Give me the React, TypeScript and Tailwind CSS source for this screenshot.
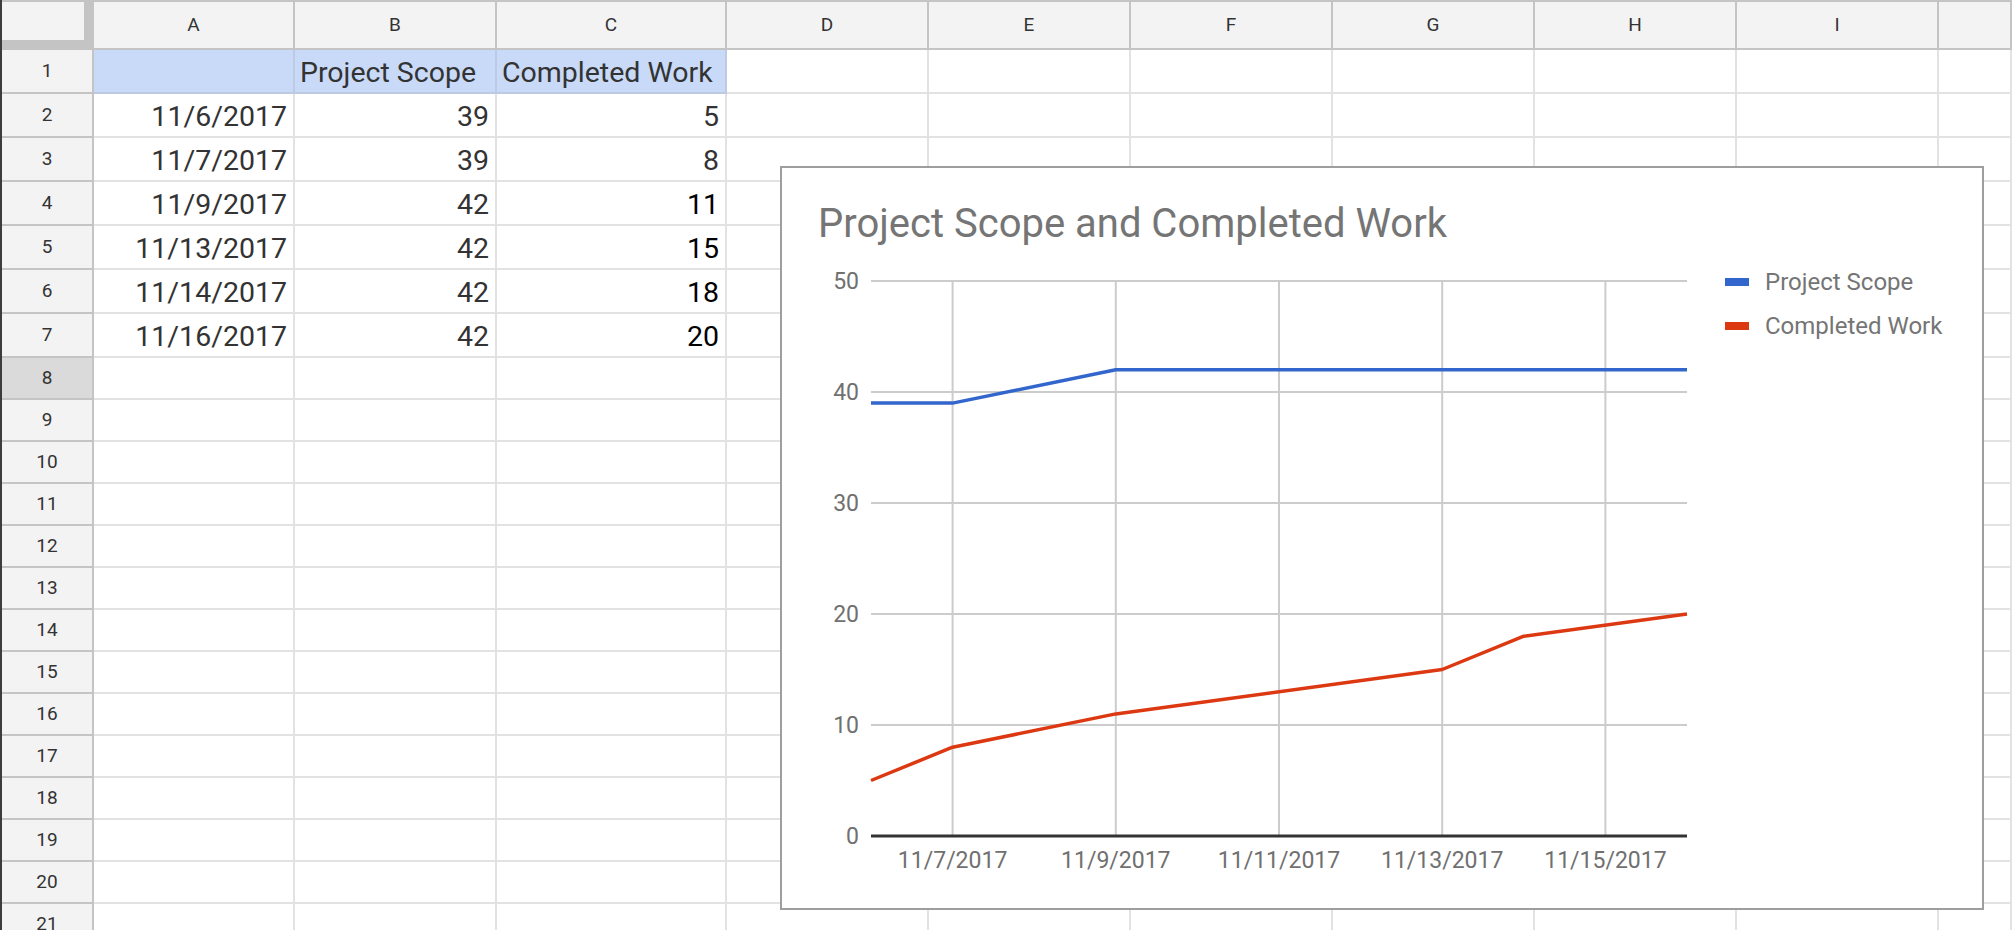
import React from "react";

const COLS =
  "grid grid-cols-[92px_201px_202px_230px_202px_202px_202px_202px_202px_202px_1fr]";

const letters = ["A", "B", "C", "D", "E", "F", "G", "H", "I", ""];

type Cell = { v: string; align?: "l" | "r"; dark?: boolean };

const data: Cell[][] = [
  [{ v: "" }, { v: "Project Scope", align: "l" }, { v: "Completed Work", align: "l" }],
  [{ v: "11/6/2017" }, { v: "39" }, { v: "5" }],
  [{ v: "11/7/2017" }, { v: "39" }, { v: "8" }],
  [{ v: "11/9/2017" }, { v: "42" }, { v: "11", dark: true }],
  [{ v: "11/13/2017" }, { v: "42" }, { v: "15", dark: true }],
  [{ v: "11/14/2017" }, { v: "42" }, { v: "18", dark: true }],
  [{ v: "11/16/2017" }, { v: "42" }, { v: "20", dark: true }],
];

function HeaderRow() {
  return (
    <div className={`${COLS} h-[50px]`}>
      <div className="bg-[#c4c4c4]">
        <div className="mt-[2px] w-[82px] h-[38px] bg-[#f3f3f3]" />
      </div>
      {letters.map((l, i) => (
        <div
          key={i}
          className="border-t-2 border-b-2 border-r-2 border-[#c4c4c4] bg-[#f3f3f3] flex items-center justify-center text-[19px] text-[#333]"
        >
          {l}
        </div>
      ))}
    </div>
  );
}

function RowHead({ n }: { n: number }) {
  const sel = n === 8;
  return (
    <div
      className={
        sel
          ? "border-r-2 border-b-2 border-[#c4c4c4] bg-[#dadada] flex items-center justify-center text-[19px] text-[#333]"
          : "border-r-2 border-b-2 border-[#c4c4c4] bg-[#f3f3f3] flex items-center justify-center text-[19px] text-[#333]"
      }
    >
      {n}
    </div>
  );
}

function DataRow({ n, cells }: { n: number; cells: Cell[] }) {
  const blue = n === 1;
  return (
    <div className={`${COLS} h-[44px]`}>
      <RowHead n={n} />
      {cells.map((c, i) => {
        const base =
          "border-r-2 border-b-2 flex items-end pb-[3px] text-[28.5px] leading-[32px] whitespace-nowrap overflow-hidden";
        const bg = blue ? " bg-[#c9daf8] border-[#bccae2]" : " border-[#e2e2e2]";
        const al = c.align === "l" ? " justify-start pl-[5px]" : " justify-end pr-[6px]";
        const col = c.dark ? " text-[#000]" : " text-[#333]";
        return (
          <div key={i} className={base + bg + al + col}>
            {c.v}
          </div>
        );
      })}
      {Array.from({ length: 7 }).map((_, i) => (
        <div key={"e" + i} className="border-r-2 border-b-2 border-[#e2e2e2]" />
      ))}
    </div>
  );
}

function EmptyRow({ n }: { n: number }) {
  return (
    <div className={`${COLS} h-[42px]`}>
      <RowHead n={n} />
      {Array.from({ length: 10 }).map((_, i) => (
        <div key={i} className="border-r-2 border-b-2 border-[#e2e2e2]" />
      ))}
    </div>
  );
}

const X0 = 89;
const DX = 81.6;
const Y0 = 590;
const DY = 11.1;
const xp = (d: number) => X0 + d * DX;
const yp = (v: number) => Y0 - v * DY;

const days = [0, 1, 3, 7, 8, 10];
const scope = [39, 39, 42, 42, 42, 42];
const work = [5, 8, 11, 15, 18, 20];

function Chart() {
  const pts = (vals: number[]) =>
    vals.map((v, i) => `${xp(days[i]).toFixed(1)},${yp(v).toFixed(1)}`).join(" ");
  const xTicks = [
    { d: 1, l: "11/7/2017" },
    { d: 3, l: "11/9/2017" },
    { d: 5, l: "11/11/2017" },
    { d: 7, l: "11/13/2017" },
    { d: 9, l: "11/15/2017" },
  ];
  return (
    <div className="absolute left-[778px] top-[166px] w-[1204px] h-[744px] border-2 border-[#9e9e9e] bg-white flex flex-col font-['Roboto',sans-serif]">
      <div className="pt-[33px] pl-[36px] text-[40px] leading-[45px] text-[#757575] whitespace-nowrap">
        Project Scope and Completed Work
      </div>
      <div className="flex flex-1">
        <svg width="930" height="662" viewBox="0 0 930 662" className="block shrink-0">
          {[10, 20, 30, 40, 50].map((v) => (
            <line key={v} x1={X0} x2={xp(10)} y1={yp(v)} y2={yp(v)} stroke="#cccccc" strokeWidth="2" />
          ))}
          {xTicks.map((t) => (
            <line key={t.d} x1={xp(t.d)} x2={xp(t.d)} y1={yp(50)} y2={yp(0)} stroke="#cccccc" strokeWidth="2" />
          ))}
          <line x1={X0} x2={xp(10)} y1={yp(0)} y2={yp(0)} stroke="#333333" strokeWidth="3" />
          {[0, 10, 20, 30, 40, 50].map((v) => (
            <text
              key={v}
              x={77}
              y={yp(v) + 8}
              textAnchor="end"
              fontSize="23"
              fill="#707070"
              fontFamily="Roboto, sans-serif"
            >
              {v}
            </text>
          ))}
          {xTicks.map((t) => (
            <text
              key={t.d}
              x={xp(t.d)}
              y={622}
              textAnchor="middle"
              fontSize="23"
              fill="#707070"
              fontFamily="Roboto, sans-serif"
            >
              {t.l}
            </text>
          ))}
          <polyline points={pts(scope)} fill="none" stroke="#3366cc" strokeWidth="3.5" strokeLinejoin="round" />
          <polyline points={pts(work)} fill="none" stroke="#dc3912" strokeWidth="3.5" strokeLinejoin="round" />
        </svg>
        <div className="pl-[13px] pt-[22px] flex flex-col gap-[16px]">
          <div className="flex items-center gap-[16px] h-[28px]">
            <div className="w-[24px] h-[8px] bg-[#3366cc]" />
            <span className="text-[24px] leading-[28px] text-[#757575] whitespace-nowrap">Project Scope</span>
          </div>
          <div className="flex items-center gap-[16px] h-[28px]">
            <div className="w-[24px] h-[8px] bg-[#dc3912]" />
            <span className="text-[24px] leading-[28px] text-[#757575] whitespace-nowrap">Completed Work</span>
          </div>
        </div>
      </div>
    </div>
  );
}

export default function App() {
  return (
    <div className="relative w-[2012px] h-[930px] overflow-hidden bg-white border-l-2 border-[#3c3c3c] font-['Roboto',Arial,sans-serif]">
      <HeaderRow />
      {data.map((cells, i) => (
        <DataRow key={i} n={i + 1} cells={cells} />
      ))}
      {Array.from({ length: 14 }).map((_, i) => (
        <EmptyRow key={i} n={i + 8} />
      ))}
      <Chart />
    </div>
  );
}
